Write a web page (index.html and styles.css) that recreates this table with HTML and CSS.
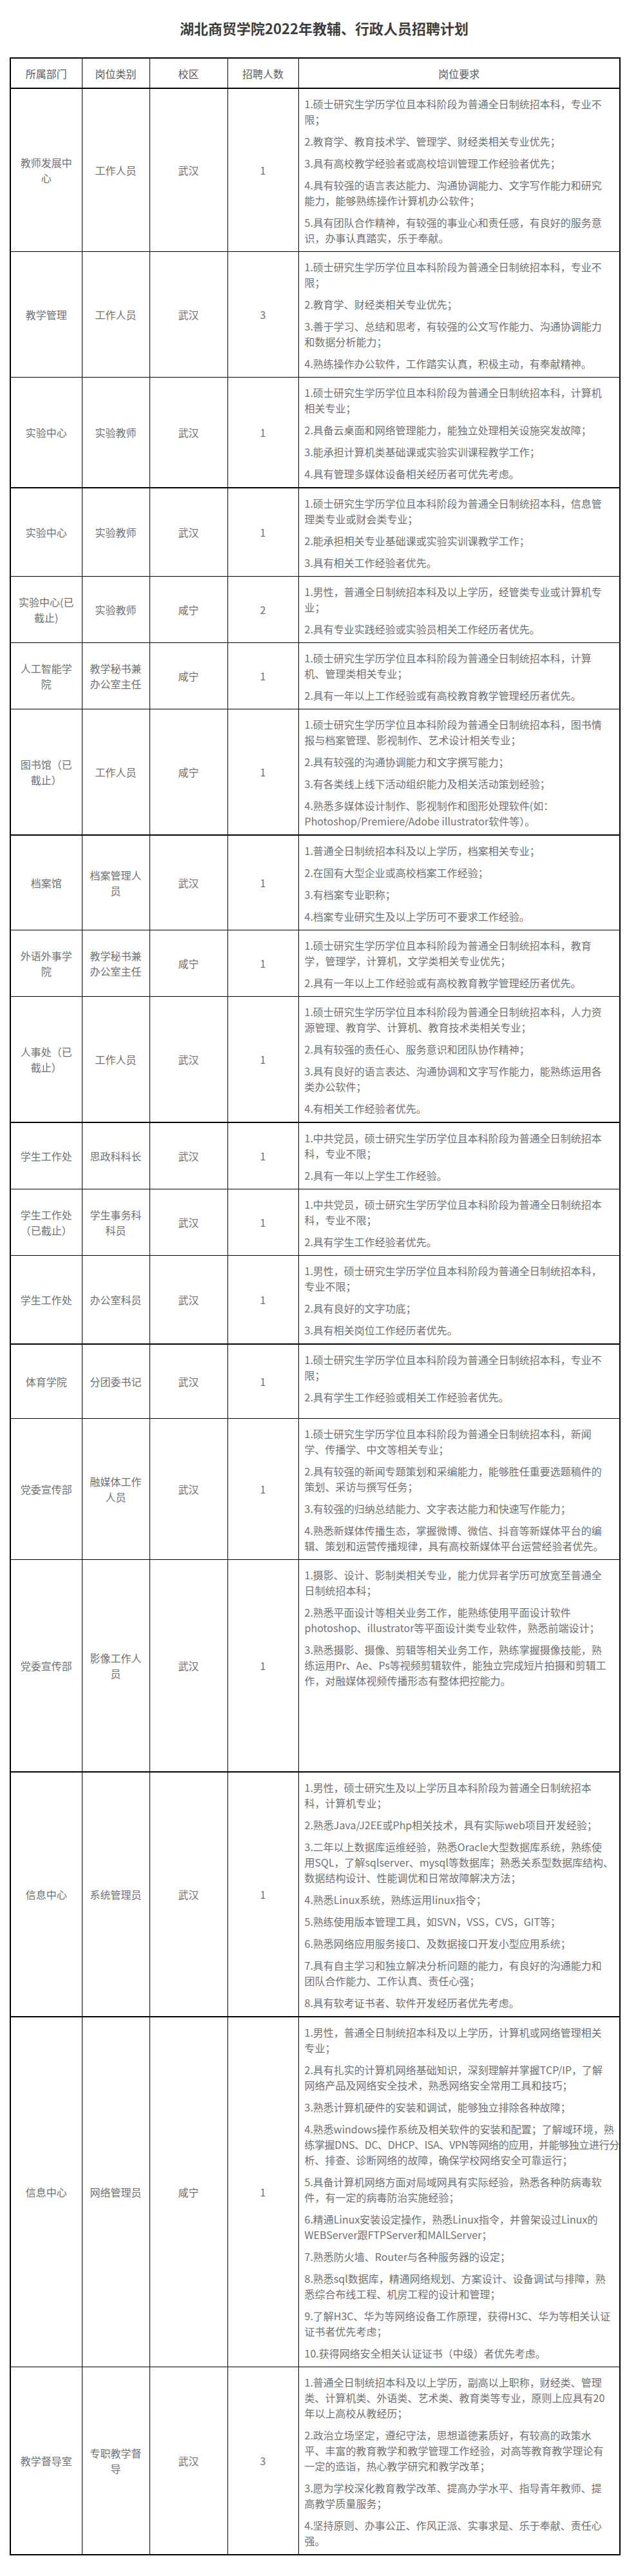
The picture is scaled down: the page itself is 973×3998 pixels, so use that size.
FILE: index.html
```html
<!DOCTYPE html>
<html lang="zh-CN">
<head>
<meta charset="utf-8">
<title>湖北商贸学院2022年教辅、行政人员招聘计划</title>
<link rel="stylesheet" href="styles.css">
</head>
<body>
<div class="page">
  <h1 class="title">湖北商贸学院2022年教辅、行政人员招聘计划</h1>
  <table class="plan">
    <colgroup>
      <col class="c-dept"><col class="c-type"><col class="c-campus"><col class="c-num"><col class="c-req">
    </colgroup>
    <thead>
      <tr><th>所属部门</th><th>岗位类别</th><th>校区</th><th>招聘人数</th><th>岗位要求</th></tr>
    </thead>
    <tbody>
      <tr>
        <td>教师发展中心</td><td>工作人员</td><td>武汉</td><td>1</td>
        <td class="req">
          <p>1.硕士研究生学历学位且本科阶段为普通全日制统招本科，专业不<br>限；</p>
          <p>2.教育学、教育技术学、管理学、财经类相关专业优先；</p>
          <p>3.具有高校教学经验者或高校培训管理工作经验者优先；</p>
          <p>4.具有较强的语言表达能力、沟通协调能力、文字写作能力和研究<br>能力，能够熟练操作计算机办公软件；</p>
          <p>5.具有团队合作精神，有较强的事业心和责任感，有良好的服务意<br>识，办事认真踏实，乐于奉献。</p>
        </td>
      </tr>
      <tr>
        <td>教学管理</td><td>工作人员</td><td>武汉</td><td>3</td>
        <td class="req">
          <p>1.硕士研究生学历学位且本科阶段为普通全日制统招本科，专业不<br>限；</p>
          <p>2.教育学、财经类相关专业优先；</p>
          <p>3.善于学习、总结和思考，有较强的公文写作能力、沟通协调能力<br>和数据分析能力；</p>
          <p>4.熟练操作办公软件，工作踏实认真，积极主动，有奉献精神。</p>
        </td>
      </tr>
      <tr class="sep">
        <td>实验中心</td><td>实验教师</td><td>武汉</td><td>1</td>
        <td class="req">
          <p>1.硕士研究生学历学位且本科阶段为普通全日制统招本科，计算机<br>相关专业；</p>
          <p>2.具备云桌面和网络管理能力，能独立处理相关设施突发故障；</p>
          <p>3.能承担计算机类基础课或实验实训课程教学工作；</p>
          <p>4.具有管理多媒体设备相关经历者可优先考虑。</p>
        </td>
      </tr>
      <tr>
        <td>实验中心</td><td>实验教师</td><td>武汉</td><td>1</td>
        <td class="req">
          <p>1.硕士研究生学历学位且本科阶段为普通全日制统招本科，信息管<br>理类专业或财会类专业；</p>
          <p>2.能承担相关专业基础课或实验实训课教学工作；</p>
          <p>3.具有相关工作经验者优先。</p>
        </td>
      </tr>
      <tr>
        <td>实验中心(已截止)</td><td>实验教师</td><td>咸宁</td><td>2</td>
        <td class="req">
          <p>1.男性，普通全日制统招本科及以上学历，经管类专业或计算机专<br>业；</p>
          <p>2.具有专业实践经验或实验员相关工作经历者优先。</p>
        </td>
      </tr>
      <tr>
        <td>人工智能学院</td><td>教学秘书兼办公室主任</td><td>咸宁</td><td>1</td>
        <td class="req">
          <p>1.硕士研究生学历学位且本科阶段为普通全日制统招本科，计算<br>机、管理类相关专业；</p>
          <p>2.具有一年以上工作经验或有高校教育教学管理经历者优先。</p>
        </td>
      </tr>
      <tr class="sep">
        <td>图书馆（已截止）</td><td>工作人员</td><td>咸宁</td><td>1</td>
        <td class="req">
          <p>1.硕士研究生学历学位且本科阶段为普通全日制统招本科，图书情<br>报与档案管理、影视制作、艺术设计相关专业；</p>
          <p>2.具有较强的沟通协调能力和文字撰写能力；</p>
          <p>3.有各类线上线下活动组织能力及相关活动策划经验；</p>
          <p>4.熟悉多媒体设计制作、影视制作和图形处理软件(如：<br>Photoshop/Premiere/Adobe illustrator软件等）。</p>
        </td>
      </tr>
      <tr>
        <td>档案馆</td><td>档案管理人员</td><td>武汉</td><td>1</td>
        <td class="req">
          <p>1.普通全日制统招本科及以上学历，档案相关专业；</p>
          <p>2.在国有大型企业或高校档案工作经验；</p>
          <p>3.有档案专业职称；</p>
          <p>4.档案专业研究生及以上学历可不要求工作经验。</p>
        </td>
      </tr>
      <tr>
        <td>外语外事学院</td><td>教学秘书兼办公室主任</td><td>咸宁</td><td>1</td>
        <td class="req">
          <p>1.硕士研究生学历学位且本科阶段为普通全日制统招本科，教育<br>学，管理学，计算机，文学类相关专业优先；</p>
          <p>2.具有一年以上工作经验或有高校教育教学管理经历者优先。</p>
        </td>
      </tr>
      <tr class="sep">
        <td>人事处（已截止）</td><td>工作人员</td><td>武汉</td><td>1</td>
        <td class="req">
          <p>1.硕士研究生学历学位且本科阶段为普通全日制统招本科，人力资<br>源管理、教育学、计算机、教育技术类相关专业；</p>
          <p>2.具有较强的责任心、服务意识和团队协作精神；</p>
          <p>3.具有良好的语言表达、沟通协调和文字写作能力，能熟练运用各<br>类办公软件；</p>
          <p>4.有相关工作经验者优先。</p>
        </td>
      </tr>
      <tr>
        <td>学生工作处</td><td>思政科科长</td><td>武汉</td><td>1</td>
        <td class="req">
          <p>1.中共党员，硕士研究生学历学位且本科阶段为普通全日制统招本<br>科，专业不限；</p>
          <p>2.具有一年以上学生工作经验。</p>
        </td>
      </tr>
      <tr>
        <td>学生工作处（已截止）</td><td>学生事务科科员</td><td>武汉</td><td>1</td>
        <td class="req">
          <p>1.中共党员，硕士研究生学历学位且本科阶段为普通全日制统招本<br>科，专业不限；</p>
          <p>2.具有学生工作经验者优先。</p>
        </td>
      </tr>
      <tr class="sep">
        <td>学生工作处</td><td>办公室科员</td><td>武汉</td><td>1</td>
        <td class="req">
          <p>1.男性，硕士研究生学历学位且本科阶段为普通全日制统招本科，<br>专业不限；</p>
          <p>2.具有良好的文字功底；</p>
          <p>3.具有相关岗位工作经历者优先。</p>
        </td>
      </tr>
      <tr>
        <td>体育学院</td><td>分团委书记</td><td>武汉</td><td>1</td>
        <td class="req extra-s">
          <p>1.硕士研究生学历学位且本科阶段为普通全日制统招本科，专业不<br>限；</p>
          <p>2.具有学生工作经验或相关工作经验者优先。</p>
        </td>
      </tr>
      <tr>
        <td>党委宣传部</td><td>融媒体工作人员</td><td>武汉</td><td>1</td>
        <td class="req">
          <p>1.硕士研究生学历学位且本科阶段为普通全日制统招本科，新闻<br>学、传播学、中文等相关专业；</p>
          <p>2.具有较强的新闻专题策划和采编能力，能够胜任重要选题稿件的<br>策划、采访与撰写任务；</p>
          <p>3.有较强的归纳总结能力、文字表达能力和快速写作能力；</p>
          <p>4.熟悉新媒体传播生态，掌握微博、微信、抖音等新媒体平台的编<br>辑、策划和运营传播规律，具有高校新媒体平台运营经验者优先。</p>
        </td>
      </tr>
      <tr class="sep">
        <td>党委宣传部</td><td>影像工作人员</td><td>武汉</td><td>1</td>
        <td class="req extra-l">
          <p>1.摄影、设计、影制类相关专业，能力优异者学历可放宽至普通全<br>日制统招本科；</p>
          <p>2.熟悉平面设计等相关业务工作，能熟练使用平面设计软件<br>photoshop、illustrator等平面设计类专业软件，熟悉前端设计；</p>
          <p>3.熟悉摄影、摄像、剪辑等相关业务工作，熟练掌握摄像技能，熟<br>练运用Pr、Ae、Ps等视频剪辑软件，能独立完成短片拍摄和剪辑工<br>作，对融媒体视频传播形态有整体把控能力。</p>
        </td>
      </tr>
      <tr class="sep">
        <td>信息中心</td><td>系统管理员</td><td>武汉</td><td>1</td>
        <td class="req">
          <p>1.男性，硕士研究生及以上学历且本科阶段为普通全日制统招本<br>科，计算机专业；</p>
          <p>2.熟悉Java/J2EE或Php相关技术，具有实际web项目开发经验；</p>
          <p>3.二年以上数据库运维经验，熟悉Oracle大型数据库系统，熟练使<br>用SQL，了解sqlserver、mysql等数据库；熟悉关系型数据库结构、<br>数据结构设计、性能调优和日常故障解决方法；</p>
          <p>4.熟悉Linux系统，熟练运用linux指令；</p>
          <p>5.熟练使用版本管理工具，如SVN，VSS，CVS，GIT等；</p>
          <p>6.熟悉网络应用服务接口、及数据接口开发小型应用系统；</p>
          <p>7.具有自主学习和独立解决分析问题的能力，有良好的沟通能力和<br>团队合作能力、工作认真、责任心强；</p>
          <p>8.具有软考证书者、软件开发经历者优先考虑。</p>
        </td>
      </tr>
      <tr>
        <td>信息中心</td><td>网络管理员</td><td>咸宁</td><td>1</td>
        <td class="req">
          <p>1.男性，普通全日制统招本科及以上学历，计算机或网络管理相关<br>专业；</p>
          <p>2.具有扎实的计算机网络基础知识，深刻理解并掌握TCP/IP，了解<br>网络产品及网络安全技术，熟悉网络安全常用工具和技巧；</p>
          <p>3.熟悉计算机硬件的安装和调试，能够独立排除各种故障；</p>
          <p>4.熟悉windows操作系统及相关软件的安装和配置；了解域环境，熟<br><span class="tight">练掌握DNS、DC、DHCP、ISA、VPN等网络的应用，并能够独立进行分</span><br>析、排查、诊断网络的故障，确保学校网络安全可靠运行；</p>
          <p>5.具备计算机网络方面对局域网具有实际经验，熟悉各种防病毒软<br>件，有一定的病毒防治实施经验；</p>
          <p>6.精通Linux安装设定操作，熟悉Linux指令，并曾架设过Linux的<br>WEBServer跟FTPServer和MAlLServer；</p>
          <p>7.熟悉防火墙、Router与各种服务器的设定；</p>
          <p>8.熟悉sql数据库，精通网络规划、方案设计、设备调试与排障，熟<br>悉综合布线工程、机房工程的设计和管理；</p>
          <p>9.了解H3C、华为等网络设备工作原理，获得H3C、华为等相关认证<br>证书者优先考虑；</p>
          <p>10.获得网络安全相关认证证书（中级）者优先考虑。</p>
        </td>
      </tr>
      <tr>
        <td>教学督导室</td><td>专职教学督导</td><td>武汉</td><td>3</td>
        <td class="req">
          <p>1.普通全日制统招本科及以上学历，副高以上职称，财经类、管理<br>类、计算机类、外语类、艺术类、教育类等专业，原则上应具有20<br>年以上高校从教经历；</p>
          <p>2.政治立场坚定，遵纪守法，思想道德素质好，有较高的政策水<br>平、丰富的教育教学和教学管理工作经验，对高等教育教学理论有<br>一定的造诣，热心教学研究和教学改革；</p>
          <p>3.愿为学校深化教育教学改革、提高办学水平、指导青年教师、提<br>高教学质量服务；</p>
          <p>4.坚持原则、办事公正、作风正派、实事求是、乐于奉献、责任心<br>强。</p>
        </td>
      </tr>
    </tbody>
  </table>
</div>
</body>
</html>
```

FILE: styles.css
```css
html, body {
  margin: 0;
  padding: 0;
  background: #ffffff;
}

body {
  font-family: "Noto Sans CJK SC", "Noto Sans", sans-serif;
  color: #717171;
}

.page {
  padding: 28px 0 35px 15px;
}

.title {
  box-sizing: border-box;
  width: 946px;
  margin: 0 0 31px;
  padding-left: 30px;
  text-align: center;
  font-size: 22px;
  line-height: 30px;
  font-weight: bold;
  color: #3d3d3d;
}

.plan {
  width: 946px;
  border-collapse: collapse;
  table-layout: fixed;
  border: 2px solid #000000;
  font-size: 16px;
  line-height: 24px;
}

.c-dept { width: 111px; }
.c-type { width: 105px; }
.c-campus { width: 121px; }
.c-num { width: 110px; }
.c-req { width: 499px; }

.plan th,
.plan td {
  border: 1px solid #000000;
  padding: 0 10px;
  text-align: center;
  vertical-align: middle;
  font-weight: normal;
  color: #717171;
}

.plan thead th {
  height: 45px;
  border-bottom: 2px solid #000000;
  color: #5a5a5a;
}

.plan tr.sep td {
  border-bottom: 2px solid #000000;
}

.plan td.req {
  text-align: left;
  padding: 11px 6px 9px 9px;
}

.req p {
  margin: 0;
  white-space: nowrap;
}

.req p + p {
  margin-top: 10px;
}

.plan td.extra-s {
  padding-bottom: 21px;
}

.plan td.extra-l {
  padding-bottom: 129px;
}

.tight {
  letter-spacing: -0.4px;
}
```
